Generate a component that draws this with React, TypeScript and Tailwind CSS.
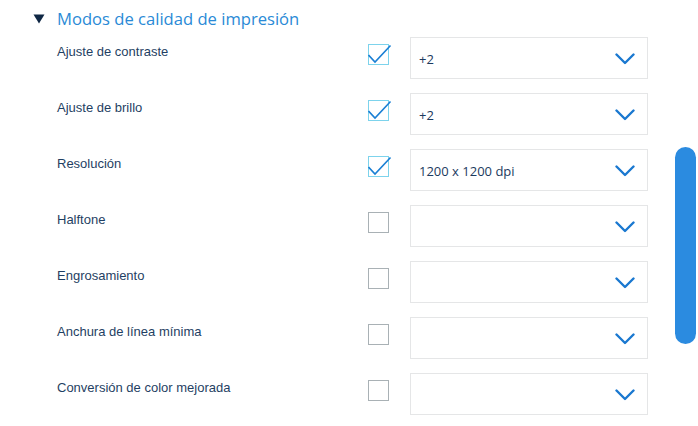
import React from "react";

type Row = { label: string; checked: boolean; value: string };

const rows: Row[] = [
  { label: "Ajuste de contraste", checked: true, value: "+2" },
  { label: "Ajuste de brillo", checked: true, value: "+2" },
  { label: "Resolución", checked: true, value: "1200 x 1200 dpi" },
  { label: "Halftone", checked: false, value: "" },
  { label: "Engrosamiento", checked: false, value: "" },
  { label: "Anchura de línea mínima", checked: false, value: "" },
  { label: "Conversión de color mejorada", checked: false, value: "" },
];

function Chevron() {
  return (
    <svg width="20" height="12" viewBox="0 0 20 12" fill="none" className="mt-[2px]" aria-hidden>
      <polyline points="1.5 1.5 10 10 18.5 1.5" stroke="#1a78d0" strokeWidth="2.4" strokeLinecap="round" strokeLinejoin="round" />
    </svg>
  );
}

function Caret() {
  return (
    <svg width="12" height="10" viewBox="0 0 12 10" aria-hidden>
      <polygon points="0.5 0.5 11.5 0.5 6 9.5" fill="#0f2744" />
    </svg>
  );
}

function Check({ checked }: { checked: boolean }) {
  return (
    <div
      className={`relative w-[21px] h-[21px] border ${
        checked ? "border-[#7dd3ec]" : "border-[#a9b1b5]"
      } bg-white`}
    >
      {checked ? (
        <svg className="absolute -left-px -top-[4px]" width="24" height="24" viewBox="0 0 24 24" fill="none" aria-hidden>
          <polyline points="0.5 14 7 21 22.5 4.5" stroke="#1a7fd4" strokeWidth="1.6" strokeLinejoin="miter" />
        </svg>
      ) : null}
    </div>
  );
}

export default function App() {
  return (
    <div className="relative w-[698px] h-[426px] bg-white overflow-hidden">
      <div className="flex items-center h-[26px] mt-[6px] pl-[33px]">
        <div className="w-[24px] flex items-center">
          <Caret />
        </div>
        <span
          className="text-[16.6px] text-[#2a8ad6]"
          style={{ fontFamily: '"Open Sans", "Noto Sans", sans-serif' }}
        >
          Modos de calidad de impresión
        </span>
      </div>

      <div className="flex flex-col gap-[14px] mt-[5px]">
        {rows.map((r) => (
          <div key={r.label} className="flex items-start h-[42px]">
            <div
              className="w-[368px] pl-[57px] pt-[5px] text-[13px] text-[#1f3f63]"
              style={{ fontFamily: '"Liberation Sans", Arial, sans-serif' }}
            >
              {r.label}
            </div>
            <div className="w-[42px] pt-[7px]">
              <Check checked={r.checked} />
            </div>
            <div className="w-[238px] h-[42px] border border-[#e5e6e7] flex items-center justify-between pl-[8px] pr-[12px]">
              <span
                className="pt-[3px] text-[13px] text-[#1c3a5e]"
                style={{ fontFamily: '"Open Sans", "Noto Sans", sans-serif' }}
              >
                {r.value}
              </span>
              <Chevron />
            </div>
          </div>
        ))}
      </div>

      <div className="absolute left-[675px] top-[147px] w-[21px] h-[197px] rounded-full bg-[#2b8be0]" />
    </div>
  );
}
